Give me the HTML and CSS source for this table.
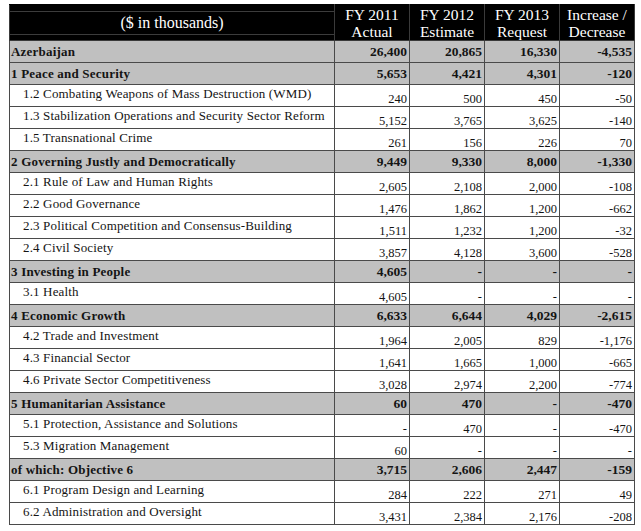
FILE: index.html
```html
<!DOCTYPE html>
<html>
<head>
<meta charset="utf-8">
<link rel="stylesheet" href="styles.css">
</head>
<body>
<table class="budget">
  <colgroup>
    <col class="c-label">
    <col class="c-num">
    <col class="c-num">
    <col class="c-num">
    <col class="c-num">
  </colgroup>
  <thead>
    <tr class="head">
      <th class="head-title"><div class="head-lines">($ in thousands)</div></th>
      <th>FY 2011<br>Actual</th>
      <th>FY 2012<br>Estimate</th>
      <th>FY 2013<br>Request</th>
      <th>Increase /<br>Decrease</th>
    </tr>
  </thead>
  <tbody>
    <tr class="total"><td class="lbl">Azerbaijan</td><td>26,400</td><td>20,865</td><td>16,330</td><td>-4,535</td></tr>
    <tr class="total"><td class="lbl">1 Peace and Security</td><td>5,653</td><td>4,421</td><td>4,301</td><td>-120</td></tr>
    <tr class="sub"><td class="lbl">1.2 Combating Weapons of Mass Destruction (WMD)</td><td>240</td><td>500</td><td>450</td><td>-50</td></tr>
    <tr class="sub"><td class="lbl">1.3 Stabilization Operations and Security Sector Reform</td><td>5,152</td><td>3,765</td><td>3,625</td><td>-140</td></tr>
    <tr class="sub"><td class="lbl">1.5 Transnational Crime</td><td>261</td><td>156</td><td>226</td><td>70</td></tr>
    <tr class="total"><td class="lbl">2 Governing Justly and Democratically</td><td>9,449</td><td>9,330</td><td>8,000</td><td>-1,330</td></tr>
    <tr class="sub"><td class="lbl">2.1 Rule of Law and Human Rights</td><td>2,605</td><td>2,108</td><td>2,000</td><td>-108</td></tr>
    <tr class="sub"><td class="lbl">2.2 Good Governance</td><td>1,476</td><td>1,862</td><td>1,200</td><td>-662</td></tr>
    <tr class="sub"><td class="lbl">2.3 Political Competition and Consensus-Building</td><td>1,511</td><td>1,232</td><td>1,200</td><td>-32</td></tr>
    <tr class="sub"><td class="lbl">2.4 Civil Society</td><td>3,857</td><td>4,128</td><td>3,600</td><td>-528</td></tr>
    <tr class="total"><td class="lbl">3 Investing in People</td><td>4,605</td><td>-</td><td>-</td><td>-</td></tr>
    <tr class="sub"><td class="lbl">3.1 Health</td><td>4,605</td><td>-</td><td>-</td><td>-</td></tr>
    <tr class="total"><td class="lbl">4 Economic Growth</td><td>6,633</td><td>6,644</td><td>4,029</td><td>-2,615</td></tr>
    <tr class="sub"><td class="lbl">4.2 Trade and Investment</td><td>1,964</td><td>2,005</td><td>829</td><td>-1,176</td></tr>
    <tr class="sub"><td class="lbl">4.3 Financial Sector</td><td>1,641</td><td>1,665</td><td>1,000</td><td>-665</td></tr>
    <tr class="sub"><td class="lbl">4.6 Private Sector Competitiveness</td><td>3,028</td><td>2,974</td><td>2,200</td><td>-774</td></tr>
    <tr class="total"><td class="lbl">5 Humanitarian Assistance</td><td>60</td><td>470</td><td>-</td><td>-470</td></tr>
    <tr class="sub"><td class="lbl">5.1 Protection, Assistance and Solutions</td><td>-</td><td>470</td><td>-</td><td>-470</td></tr>
    <tr class="sub"><td class="lbl">5.3 Migration Management</td><td>60</td><td>-</td><td>-</td><td>-</td></tr>
    <tr class="total"><td class="lbl">of which: Objective 6</td><td>3,715</td><td>2,606</td><td>2,447</td><td>-159</td></tr>
    <tr class="sub"><td class="lbl">6.1 Program Design and Learning</td><td>284</td><td>222</td><td>271</td><td>49</td></tr>
    <tr class="sub"><td class="lbl">6.2 Administration and Oversight</td><td>3,431</td><td>2,384</td><td>2,176</td><td>-208</td></tr>
  </tbody>
</table>
</body>
</html>
```
FILE: styles.css
```css
html, body {
  background: #fff;
}
body {
  margin: 4px 0 0 9px;
  font-family: "Liberation Serif", "Times New Roman", serif;
  color: #141414;
}
.budget {
  border-collapse: collapse;
  table-layout: fixed;
  width: 626px;
  font-family: "Liberation Serif", "Times New Roman", serif;
}
.c-label { width: 325px; }
.c-num { width: 75px; }

.budget th, .budget td {
  border: 1px solid #4a4a4a;
  padding: 0;
  font-family: "Liberation Serif", "Times New Roman", serif;
}

.head {
  height: 36px;
}
.head th {
  background: #000;
  color: #fff;
  font-weight: normal;
  font-size: 15.5px;
  line-height: 17px;
  text-align: center;
  vertical-align: middle;
  border-color: #3a3a3a;
  border-top-color: #000;
}
.head .head-title {
  font-size: 16px;
}
.head-lines {
  height: 35px;
  line-height: 35px;
  font-family: "Liberation Serif", "Times New Roman", serif;
  font-size: 16px;
  background:
    linear-gradient(#3c3c3c, #3c3c3c) 0 6px / 100% 1px no-repeat,
    linear-gradient(#3c3c3c, #3c3c3c) 0 29px / 100% 1px no-repeat;
}

.budget tbody tr {
  height: 22px;
}
.budget tbody td {
  text-align: right;
  padding-right: 2px;
}
.total td {
  background: #c0c0c0;
  font-weight: bold;
  font-size: 13.5px;
  line-height: 15px;
  vertical-align: middle;
}
.total td.lbl {
  text-align: left;
  padding-left: 1px;
  font-size: 13px;
  letter-spacing: 0.2px;
}
.sub td {
  background: #fff;
  font-size: 12.5px;
  vertical-align: bottom;
  line-height: 14px;
  padding-bottom: 0;
}
.sub td.lbl {
  text-align: left;
  vertical-align: top;
  font-size: 13px;
  line-height: 15px;
  padding: 1px 0 0 13px;
  letter-spacing: 0.15px;
  white-space: nowrap;
}
```
